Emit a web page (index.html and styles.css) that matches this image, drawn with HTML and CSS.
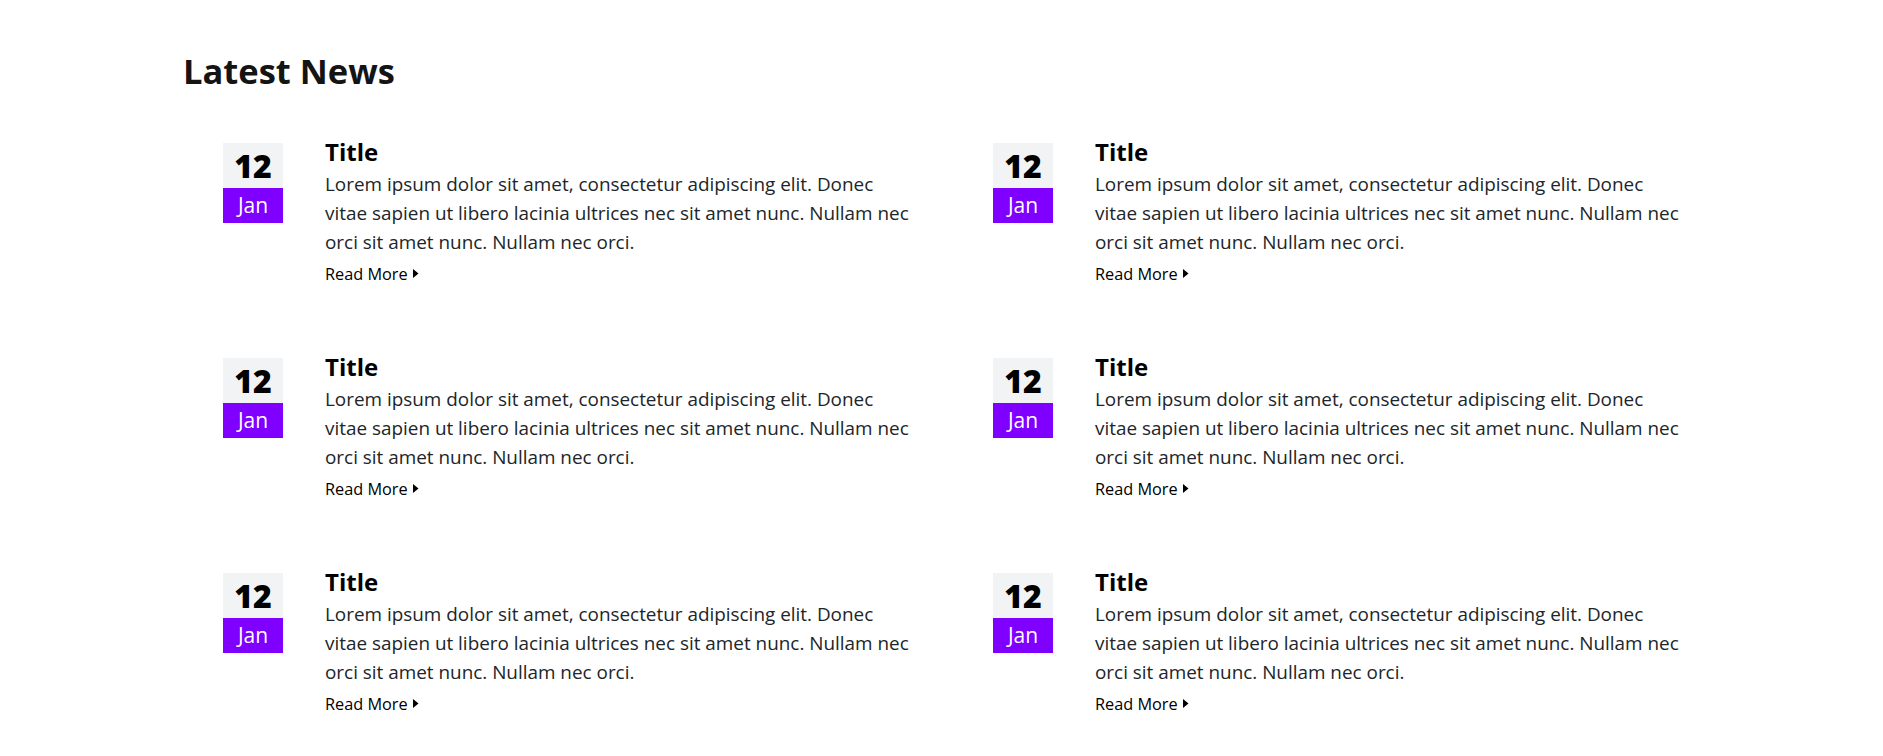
FILE: index.html
```html
<!DOCTYPE html>
<html lang="en">
<head>
<meta charset="utf-8">
<title>Latest News</title>
<link rel="stylesheet" href="styles.css">
</head>
<body>
<main class="page">
  <h1 class="heading">Latest News</h1>
  <div class="news-grid">
    <article class="news-item">
      <div class="date"><div class="date-day">12</div><div class="date-month">Jan</div></div>
      <div class="news-body">
        <h2 class="news-title">Title</h2>
        <p class="news-text">Lorem ipsum dolor sit amet, consectetur adipiscing elit. Donec vitae sapien ut libero lacinia ultrices nec sit amet nunc. Nullam nec orci sit amet nunc. Nullam nec orci.</p>
        <a class="read-more" href="#">Read More<svg class="caret" viewBox="0 0 6 9" width="6" height="9"><path d="M0 0 L5.5 4.5 L0 9 Z"/></svg></a>
      </div>
    </article>
    <article class="news-item">
      <div class="date"><div class="date-day">12</div><div class="date-month">Jan</div></div>
      <div class="news-body">
        <h2 class="news-title">Title</h2>
        <p class="news-text">Lorem ipsum dolor sit amet, consectetur adipiscing elit. Donec vitae sapien ut libero lacinia ultrices nec sit amet nunc. Nullam nec orci sit amet nunc. Nullam nec orci.</p>
        <a class="read-more" href="#">Read More<svg class="caret" viewBox="0 0 6 9" width="6" height="9"><path d="M0 0 L5.5 4.5 L0 9 Z"/></svg></a>
      </div>
    </article>
    <article class="news-item">
      <div class="date"><div class="date-day">12</div><div class="date-month">Jan</div></div>
      <div class="news-body">
        <h2 class="news-title">Title</h2>
        <p class="news-text">Lorem ipsum dolor sit amet, consectetur adipiscing elit. Donec vitae sapien ut libero lacinia ultrices nec sit amet nunc. Nullam nec orci sit amet nunc. Nullam nec orci.</p>
        <a class="read-more" href="#">Read More<svg class="caret" viewBox="0 0 6 9" width="6" height="9"><path d="M0 0 L5.5 4.5 L0 9 Z"/></svg></a>
      </div>
    </article>
    <article class="news-item">
      <div class="date"><div class="date-day">12</div><div class="date-month">Jan</div></div>
      <div class="news-body">
        <h2 class="news-title">Title</h2>
        <p class="news-text">Lorem ipsum dolor sit amet, consectetur adipiscing elit. Donec vitae sapien ut libero lacinia ultrices nec sit amet nunc. Nullam nec orci sit amet nunc. Nullam nec orci.</p>
        <a class="read-more" href="#">Read More<svg class="caret" viewBox="0 0 6 9" width="6" height="9"><path d="M0 0 L5.5 4.5 L0 9 Z"/></svg></a>
      </div>
    </article>
    <article class="news-item">
      <div class="date"><div class="date-day">12</div><div class="date-month">Jan</div></div>
      <div class="news-body">
        <h2 class="news-title">Title</h2>
        <p class="news-text">Lorem ipsum dolor sit amet, consectetur adipiscing elit. Donec vitae sapien ut libero lacinia ultrices nec sit amet nunc. Nullam nec orci sit amet nunc. Nullam nec orci.</p>
        <a class="read-more" href="#">Read More<svg class="caret" viewBox="0 0 6 9" width="6" height="9"><path d="M0 0 L5.5 4.5 L0 9 Z"/></svg></a>
      </div>
    </article>
    <article class="news-item">
      <div class="date"><div class="date-day">12</div><div class="date-month">Jan</div></div>
      <div class="news-body">
        <h2 class="news-title">Title</h2>
        <p class="news-text">Lorem ipsum dolor sit amet, consectetur adipiscing elit. Donec vitae sapien ut libero lacinia ultrices nec sit amet nunc. Nullam nec orci sit amet nunc. Nullam nec orci.</p>
        <a class="read-more" href="#">Read More<svg class="caret" viewBox="0 0 6 9" width="6" height="9"><path d="M0 0 L5.5 4.5 L0 9 Z"/></svg></a>
      </div>
    </article>
  </div>
</main>
</body>
</html>
```
FILE: styles.css
```css
html, body {
  margin: 0;
  padding: 0;
  background: #ffffff;
}

body {
  font-family: "Open Sans", "Noto Sans", sans-serif;
  color: #212529;
}

.page {
  padding: 50px 0 0 185px;
}

.heading {
  margin: 0 0 0 -2px;
  font-size: 34.5px;
  line-height: 41px;
  font-weight: 700;
  color: #141414;
}

.news-grid {
  margin-top: 46px;
  display: grid;
  grid-template-columns: 770px 770px;
  grid-auto-rows: 215px;
}

.news-item {
  display: flex;
  align-items: flex-start;
}

.date {
  width: 60px;
  margin: 6px 0 0 38px;
  flex: none;
  text-align: center;
}

.date-day {
  height: 45px;
  background: #f2f3f5;
  color: #000000;
  font-size: 32px;
  line-height: 45px;
  font-weight: 800;
}

.date-month {
  height: 35px;
  background: #7f00ff;
  color: #ffffff;
  font-size: 21px;
  line-height: 35px;
}

.news-body {
  margin-left: 42px;
  width: 590px;
}

.news-title {
  margin: 0 0 3.5px;
  font-size: 24px;
  line-height: 29px;
  font-weight: 700;
  color: #000000;
}

.news-text {
  margin: 0;
  font-size: 18.9px;
  line-height: 29.3px;
}

.read-more {
  display: inline-flex;
  align-items: center;
  margin-top: 4.2px;
  font-size: 16.3px;
  line-height: 24px;
  font-weight: 400;
  color: #000000;
  text-decoration: none;
}

.caret {
  margin-left: 5px;
  fill: #000000;
}
```
